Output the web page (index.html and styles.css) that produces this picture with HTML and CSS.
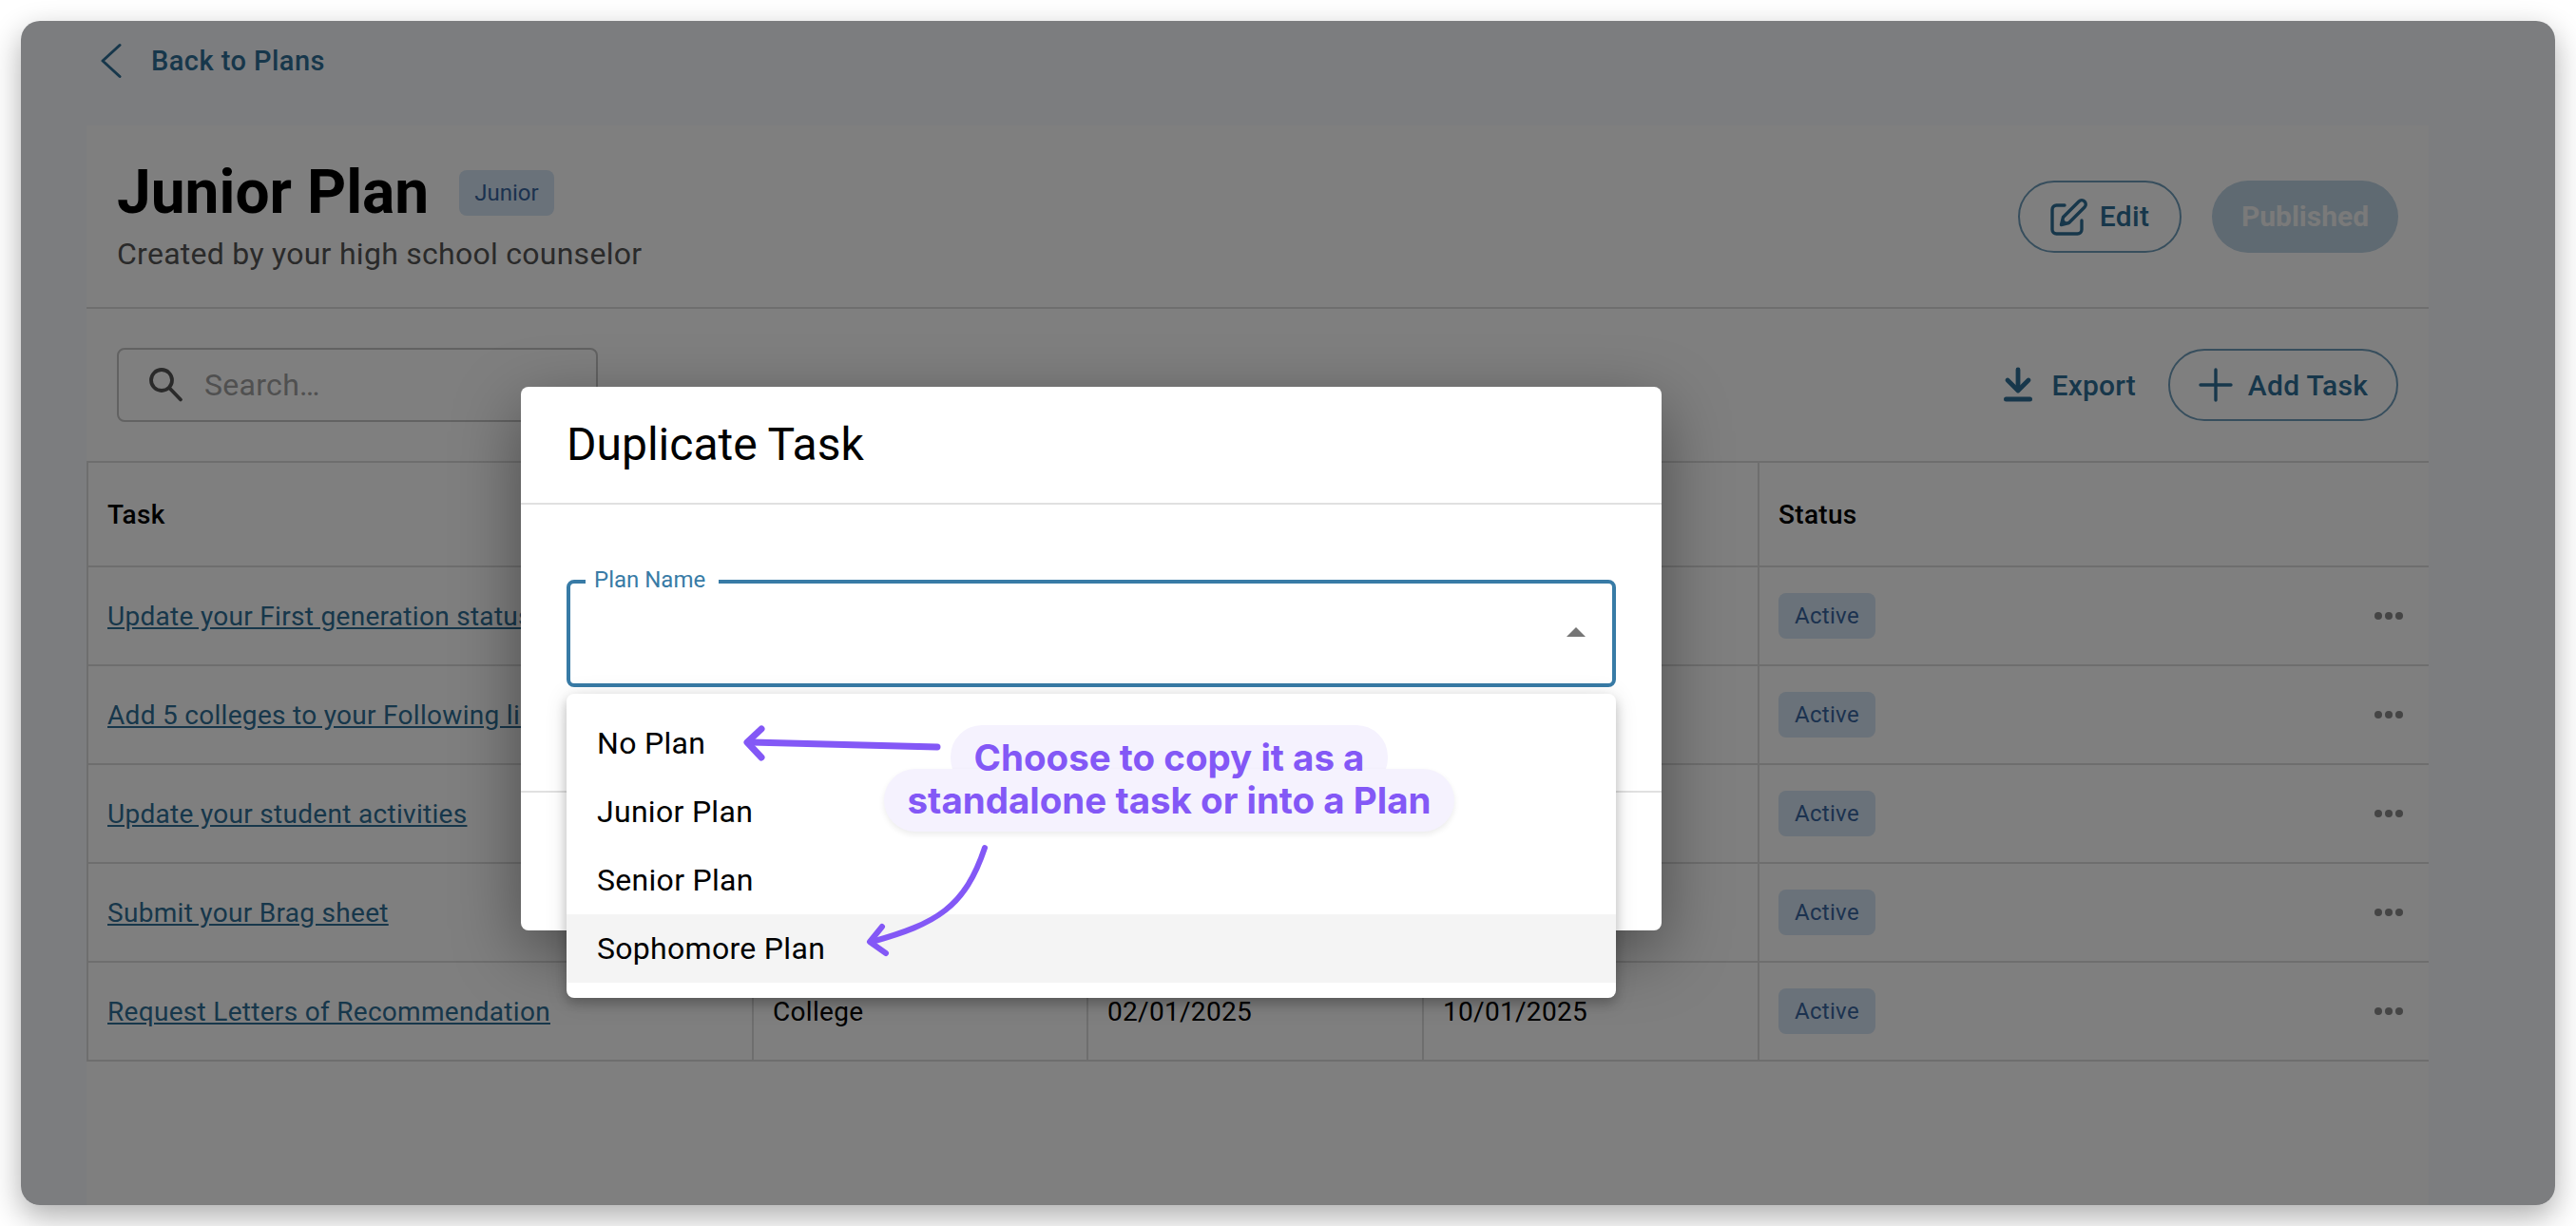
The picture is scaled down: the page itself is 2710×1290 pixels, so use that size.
FILE: index.html
```html
<!DOCTYPE html>
<html lang="en">
<head>
<meta charset="utf-8">
<title>Junior Plan</title>
<link rel="stylesheet" href="styles.css">
</head>
<body>
<div class="window">
  <div class="backbar">
    <svg class="back-icon" viewBox="0 0 24 40"><path d="M22 3.500 L4 20 L22 36.500" fill="none" stroke="currentColor" stroke-width="3" stroke-linecap="round" stroke-linejoin="round"/></svg>
    <span class="back-label">Back to Plans</span>
  </div>
  <main class="panel">
    <header class="plan-head">
      <div class="plan-info">
        <div class="plan-title-row">
          <h1 class="plan-title">Junior Plan</h1>
          <span class="chip chip-junior">Junior</span>
        </div>
        <p class="plan-sub">Created by your high school counselor</p>
      </div>
      <div class="plan-actions">
        <button class="btn btn-outline btn-edit">
          <svg class="btn-icon" viewBox="0 0 40 40"><path d="M15 8 H6.500 a4.500 4.500 0 0 0 -4.500 4.500 V33.500 a4.500 4.500 0 0 0 4.500 4.500 H28.500 a4.500 4.500 0 0 0 4.500 -4.500 V24" fill="none" stroke="currentColor" stroke-width="3.400" stroke-linecap="round"/><path d="M11.500 28.500 L13.500 20.500 L30 4 a4.200 4.200 0 0 1 6 6 L19.500 26.500 Z" fill="none" stroke="currentColor" stroke-width="3.400" stroke-linejoin="round"/><path d="M11.500 28.500 L13 22 L18 27 Z" fill="currentColor"/></svg>
          Edit
        </button>
        <button class="btn btn-published">Published</button>
      </div>
    </header>
    <div class="toolbar">
      <label class="search">
        <svg class="search-icon" viewBox="0 0 40 40"><circle cx="15" cy="15" r="11" fill="none" stroke="currentColor" stroke-width="3.800"/><path d="M23 23 L35 35.500" stroke="currentColor" stroke-width="3.800" stroke-linecap="round"/></svg>
        <span class="search-text">Search…</span>
      </label>
      <div class="tools">
        <button class="btn-text">
          <svg class="btn-icon" viewBox="0 0 32 40"><path d="M16 4 V24" stroke="currentColor" stroke-width="4.800" stroke-linecap="round"/><path d="M5 15 L16 26 L27 15" fill="none" stroke="currentColor" stroke-width="4.800" stroke-linecap="round" stroke-linejoin="round"/><rect x="1" y="32.500" width="30" height="5" rx="2.500" fill="currentColor"/></svg>
          Export
        </button>
        <button class="btn btn-outline btn-add">
          <svg class="btn-icon" viewBox="0 0 36 36"><path d="M18 2 V34 M2 18 H34" stroke="currentColor" stroke-width="3.400" stroke-linecap="round"/></svg>
          Add Task
        </button>
      </div>
    </div>
    <table class="tasks">
      <thead>
        <tr><th class="col-task">Task</th><th class="col-type"></th><th class="col-date"></th><th class="col-date"></th><th class="col-status">Status</th></tr>
      </thead>
      <tbody>
        <tr><td><a class="task-link">Update your First generation status</a></td><td></td><td></td><td></td><td><div class="status-cell"><span class="chip">Active</span><span class="more"><i></i><i></i><i></i></span></div></td></tr>
        <tr><td><a class="task-link">Add 5 colleges to your Following list</a></td><td></td><td></td><td></td><td><div class="status-cell"><span class="chip">Active</span><span class="more"><i></i><i></i><i></i></span></div></td></tr>
        <tr><td><a class="task-link">Update your student activities</a></td><td></td><td></td><td></td><td><div class="status-cell"><span class="chip">Active</span><span class="more"><i></i><i></i><i></i></span></div></td></tr>
        <tr><td><a class="task-link">Submit your Brag sheet</a></td><td></td><td></td><td></td><td><div class="status-cell"><span class="chip">Active</span><span class="more"><i></i><i></i><i></i></span></div></td></tr>
        <tr><td><a class="task-link">Request Letters of Recommendation</a></td><td>College</td><td>02/01/2025</td><td>10/01/2025</td><td><div class="status-cell"><span class="chip">Active</span><span class="more"><i></i><i></i><i></i></span></div></td></tr>
      </tbody>
    </table>
  </main>
  <div class="backdrop"></div>
  <section class="dialog">
    <h2 class="dialog-title">Duplicate Task</h2>
    <div class="dialog-body">
      <div class="select">
        <span class="select-label">Plan Name</span>
        <svg class="select-arrow" viewBox="0 0 20 10"><path d="M0 10 L10 0 L20 10 Z" fill="currentColor"/></svg>
      </div>
    </div>
    <div class="dialog-foot"></div>
  </section>
  <ul class="menu">
    <li class="menu-item">No Plan</li>
    <li class="menu-item">Junior Plan</li>
    <li class="menu-item">Senior Plan</li>
    <li class="menu-item menu-item-active">Sophomore Plan</li>
  </ul>
</div>
<div class="callout">
  <div class="callout-line callout-line-1"><span class="callout-text">Choose to copy it as a</span></div>
  <div class="callout-line callout-line-2">standalone task or into a Plan</div>
</div>
<svg class="arrows" viewBox="0 0 2710 1290">
  <g fill="none" stroke="#8358f6" stroke-linecap="round" stroke-linejoin="round">
    <path d="M986 786 L790 781" stroke-width="7"/>
    <path d="M801 767 L786 781 L801 797" stroke-width="7"/>
    <path d="M1036 892 C1015 955 985 972 917 991" stroke-width="6"/>
    <path d="M928 975 L915 991 L932 1003" stroke-width="6"/>
  </g>
</svg>
</body>
</html>
```
FILE: styles.css
```css
* { box-sizing: border-box; }
html, body { margin: 0; height: 100%; }
body {
  position: relative;
  width: 2710px;
  height: 1290px;
  padding: 22px;
  background: #fff;
  overflow: hidden;
  font-family: Roboto, "Liberation Sans", sans-serif;
  color: #000;
}
.window {
  position: relative;
  width: 2666px;
  height: 1246px;
  background: #f8fafe;
  border-radius: 20px;
  overflow: hidden;
  padding-left: 69px;
}
body::before {
  content: "";
  position: absolute;
  left: 22px; top: 22px;
  width: 2666px; height: 1246px;
  border-radius: 20px;
  box-shadow: 0 12px 32px rgba(0,0,0,.32);
}
.backbar {
  display: flex;
  align-items: center;
  height: 88px;
  padding: 0 0 4px 13px;
  color: #2f6f96;
}
.back-icon { width: 24px; height: 40px; margin-right: 31px; }
.back-label { font-size: 29px; font-weight: 500; letter-spacing: .45px; }
.panel {
  width: 2464px;
  height: 1160px;
  margin-top: 22px;
  background: #fff;
}
.plan-head {
  display: flex;
  align-items: center;
  justify-content: space-between;
  height: 193px;
  padding: 0 32px;
  border-bottom: 2px solid #dcdcdc;
}
.plan-info { margin-bottom: 5px; }
.plan-title-row { display: flex; align-items: center; gap: 32px; }
.plan-title { margin: 0; font-size: 64px; line-height: 80px; font-weight: 700; }
.plan-sub { margin: 4px 0 0; font-size: 32px; line-height: 40px; color: #555; letter-spacing: .27px; }
.plan-actions { display: flex; gap: 32px; }
.chip {
  display: inline-flex;
  align-items: center;
  height: 48px;
  padding: 0 17px;
  border-radius: 8px;
  background: #d4e4f4;
  color: #38649f;
  font-size: 24px;
}
.chip-junior { padding: 0 16px; }
.btn {
  display: inline-flex;
  align-items: center;
  justify-content: center;
  height: 76px;
  border-radius: 38px;
  font: 500 30px Roboto, sans-serif;
  letter-spacing: .3px;
  border: 2px solid transparent;
  background: none;
}
.btn-outline { border-color: #6f9dbb; color: #2f6f96; }
.btn-edit { width: 172px; gap: 12px; }
.btn-edit .btn-icon { width: 40px; height: 40px; }
.btn-published { width: 196px; background: #bed4e4; color: #f4f4f4; font-weight: 700; letter-spacing: 0; }
.toolbar {
  display: flex;
  align-items: center;
  justify-content: space-between;
  height: 160px;
  padding: 0 32px;
}
.search {
  display: flex;
  align-items: center;
  width: 506px;
  height: 78px;
  padding-left: 30px;
  border: 2px solid #c4c4c4;
  border-radius: 8px;
  color: #a0a0a0;
  font-size: 32px;
  letter-spacing: .3px;
}
.search-icon { width: 40px; height: 40px; color: #555; margin-right: 20px; flex: none; }
.tools { display: flex; align-items: center; gap: 34px; }
.btn-text {
  display: inline-flex;
  align-items: center;
  gap: 20px;
  padding: 0;
  border: 0;
  background: none;
  color: #2f6f96;
  font: 500 30px Roboto, sans-serif;
  letter-spacing: .2px;
}
.btn-text .btn-icon { width: 32px; height: 40px; }
.btn-add { width: 242px; gap: 16px; }
.btn-add .btn-icon { width: 36px; height: 36px; }
.tasks {
  width: 2464px;
  table-layout: fixed;
  border-collapse: collapse;
  border-top: 2px solid #dcdcdc;
  font-size: 28px;
  letter-spacing: .3px;
}
.tasks th, .tasks td {
  padding: 0 20px;
  border-bottom: 2px solid #dcdcdc;
  border-left: 2px solid #dcdcdc;
  text-align: left;
  overflow: hidden;
  white-space: nowrap;
}
.tasks th { height: 110px; font-weight: 500; }
.tasks td { height: 104px; }
.col-task { width: 700px; }
.col-type { width: 352px; }
.col-date { width: 353px; }
.task-link { color: #2f6f96; text-decoration: underline; }
.status-cell { display: flex; align-items: center; justify-content: space-between; padding-right: 7px; }
.more { display: flex; gap: 3px; }
.more i { width: 8px; height: 8px; border-radius: 50%; background: #8a8a8a; }
.backdrop {
  position: absolute;
  inset: 0;
  background: rgba(0,0,0,.5);
}
.dialog {
  position: absolute;
  left: 526px;
  top: 385px;
  width: 1200px;
  height: 572px;
  background: #fff;
  border-radius: 8px;
  box-shadow: 0 22px 70px rgba(0,0,0,.4);
  display: flex;
  flex-direction: column;
}
.dialog-title {
  margin: 0;
  height: 124px;
  padding: 0 48px 2px;
  display: flex;
  align-items: center;
  font-size: 48px;
  font-weight: 400;
  border-bottom: 2px solid #e0e0e0;
}
.dialog-body { height: 303px; padding: 79px 48px 0; border-bottom: 2px solid #e0e0e0; }
.select {
  position: relative;
  height: 113px;
  border: 4px solid #387ba6;
  border-radius: 8px;
}
.select-label {
  position: absolute;
  left: 16px;
  top: -18px;
  padding: 0 14px 0 9px;
  background: #fff;
  color: #387ba6;
  font-size: 24px;
  line-height: 28px;
}
.select-arrow { position: absolute; right: 28px; top: 46px; width: 20px; height: 10px; color: #757575; }
.menu {
  position: absolute;
  left: 574px;
  top: 708px;
  width: 1104px;
  margin: 0;
  padding: 16px 0;
  list-style: none;
  background: #fff;
  border-radius: 8px;
  box-shadow: 0 6px 12px rgba(0,0,0,.2), 0 2px 24px rgba(0,0,0,.12);
}
.menu-item {
  height: 72px;
  padding: 0 32px;
  display: flex;
  align-items: center;
  font-size: 32px;
  letter-spacing: .3px;
}
.menu-item-active { background: #f4f4f4; }
.callout {
  position: absolute;
  left: 930px;
  top: 763px;
  width: 600px;
  height: 112px;
  display: flex;
  flex-direction: column;
  align-items: center;
  color: #8358f6;
  font: 700 38.5px/46px Inter, sans-serif;
}
.callout-line {
  padding: 0 25px;
  background: #f5f2fe;
  border-radius: 33px;
  display: flex;
  align-items: center;
  white-space: nowrap;
}
.callout-line-1 { height: 68px; }
.callout-text { position: relative; z-index: 2; }
.callout-line-2 {
  position: relative;
  margin-top: -22px;
  height: 66px;
  box-shadow: 0 3px 6px rgba(0,0,0,.08);
}
.arrows {
  position: absolute;
  left: 0; top: 0;
  width: 2710px; height: 1290px;
  pointer-events: none;
}
```
